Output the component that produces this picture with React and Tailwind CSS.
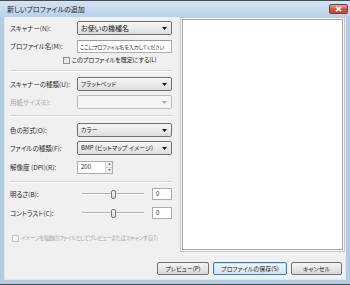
import React from "react";

function Arrow({ disabled }) {
  return (
    <svg width="5" height="3" viewBox="0 0 5 3" className="shrink-0">
      <path d="M0 0 H5 L2.5 3 Z" fill={disabled ? "#a8a8a8" : "#1a1a1a"} />
    </svg>
  );
}

function Select({ value, disabled, big }) {
  return (
    <div
      className={
        "w-[95px] h-[14px] rounded-[2px] border flex items-center justify-between pl-[3px] pr-[4px] " +
        (disabled
          ? "border-[#b8bcc0] bg-[#f4f4f4]"
          : "border-[#707070] bg-gradient-to-b from-[#f6f6f6] to-[#dedede]")
      }
    >
      <span className={big ? "text-[7px]" : "text-[6px]"}>{value}</span>
      <Arrow disabled={disabled} />
    </div>
  );
}

function Label({ children, disabled }) {
  return (
    <span className={"w-[67px] shrink-0 whitespace-nowrap " + (disabled ? "text-[#a8a8a8]" : "text-[#2a2a2a]")}>
      {children}
    </span>
  );
}

function Sep() {
  return <div className="h-[2px] w-[162px] border-t border-[#d4d4d4] border-b border-b-white" />;
}

function Slider({ pos }) {
  return (
    <div className="w-[62px] h-[11px] ml-[5px] relative flex items-center">
      <div className="w-full h-[2px] border-t border-[#b0b0b0] border-b border-b-[#ffffff] bg-[#e7e7e7]" />
      <div
        className="absolute top-[1px] w-[5px] h-[9px] rounded-[2px] border border-[#7a7a7a] bg-gradient-to-b from-[#fafafa] to-[#d8d8d8]"
        style={{ left: pos }}
      />
    </div>
  );
}

function NumBox({ v }) {
  return (
    <div className="w-[20px] h-[12px] ml-auto mr-[8px] border border-[#abadb3] bg-white flex items-center pl-[3px] text-[6px]">
      {v}
    </div>
  );
}

function Row({ children, className = "" }) {
  return <div className={"h-[14px] flex items-center " + className}>{children}</div>;
}

function Btn({ children, w, focus }) {
  return (
    <div
      className={
        "h-[13px] rounded-[2px] border flex items-center justify-center text-[6px] whitespace-nowrap " +
        (focus
          ? "border-[#3c7fb1] bg-gradient-to-b from-[#f4f8fb] to-[#d8e2ea] shadow-[inset_0_0_0_1px_#c2e4f6]"
          : "border-[#707070] bg-gradient-to-b from-[#f4f4f4] to-[#d9d9d9]")
      }
      style={{ width: w }}
    >
      {children}
    </div>
  );
}

export default function App() {
  return (
    <div className="w-[350px] h-[285px] flex flex-col bg-[#b4cbe4] border-t border-b border-[#434d58] font-['Noto_Sans_CJK_JP','Noto_Sans',sans-serif] [font-feature-settings:'palt'] text-[6.5px] leading-none text-[#222] overflow-hidden">
      <div className="h-[16px] shrink-0 flex items-center justify-between pl-[7px] pr-[2px] bg-gradient-to-b from-[#d4e3f3] to-[#bad0e8]">
        <span className="text-[7px] text-[#1c1c1c]">新しいプロファイルの追加</span>
        <div className="w-[19px] h-[10px] rounded-[2px] border border-[#7e3a33] bg-gradient-to-b from-[#e3a59a] via-[#c5594b] to-[#b84a3c] flex items-center justify-center">
          <svg width="7" height="6" viewBox="0 0 7 6">
            <path d="M1 0.8 L6 5.2 M6 0.8 L1 5.2" stroke="#ffffff" strokeWidth="1.6" />
          </svg>
        </div>
      </div>
      <div className="flex-1 flex px-[4px] pb-[4px]">
        <div className="flex-1 flex flex-col bg-[#f0f0f0] border-l border-r border-b border-[#dfe9f4]">
          <div className="flex">
            <div className="w-[175px] shrink-0 pl-[5px] flex flex-col">
              <Row className="mt-[4px]">
                <Label>スキャナー(N):</Label>
                <Select value="お使いの機種名" big />
              </Row>
              <Row className="mt-[4px]">
                <Label>プロファイル名(M):</Label>
                <div className="w-[95px] h-[13px] border border-[#abadb3] border-t-[#9a9ca3] bg-white flex items-center pl-[2px] overflow-hidden whitespace-nowrap text-[5px] tracking-[-0.1px] text-[#222]">
                  ここにプロファイル名を入力してください
                </div>
              </Row>
              <div className="h-[8px] mt-[3px] flex items-center pl-[53px]">
                <div className="w-[7px] h-[7px] border border-[#8f8f8f] bg-gradient-to-br from-[#dcdcdc] to-[#fafafa] mr-[2px]" />
                <span className="text-[6px] whitespace-nowrap">このプロファイルを既定にする(L)</span>
              </div>
              <div className="mt-[6px]"><Sep /></div>
              <Row className="mt-[5px]">
                <Label>スキャナーの種類(U):</Label>
                <Select value="フラットベッド" />
              </Row>
              <Row className="mt-[4px]">
                <Label disabled>用紙サイズ(E):</Label>
                <Select value="" disabled />
              </Row>
              <div className="mt-[6px]"><Sep /></div>
              <Row className="mt-[6px]">
                <Label>色の形式(O):</Label>
                <Select value="カラー" />
              </Row>
              <Row className="mt-[4px]">
                <Label>ファイルの種類(F):</Label>
                <Select value="BMP (ビットマップ イメージ)" />
              </Row>
              <Row className="mt-[5px]">
                <Label>解像度 (DPI)(R):</Label>
                <div className="w-[36px] h-[13px] border border-[#abadb3] bg-white flex items-center">
                  <span className="flex-1 pl-[3px] text-[6px]">200</span>
                  <div className="w-[7px] h-full flex flex-col border-l border-[#d6d6d6]">
                    <div className="flex-1 flex items-center justify-center bg-[#f0f0f0] border-b border-[#d6d6d6]">
                      <svg width="3" height="2" viewBox="0 0 3 2"><path d="M0 2 H3 L1.5 0 Z" fill="#7a7a7a" /></svg>
                    </div>
                    <div className="flex-1 flex items-center justify-center bg-[#f0f0f0]">
                      <svg width="3" height="2" viewBox="0 0 3 2"><path d="M0 0 H3 L1.5 2 Z" fill="#7a7a7a" /></svg>
                    </div>
                  </div>
                </div>
              </Row>
              <div className="mt-[7px]"><Sep /></div>
              <Row className="mt-[4px]">
                <Label>明るさ(B):</Label>
                <Slider pos={29} />
                <NumBox v="0" />
              </Row>
              <Row className="mt-[5px]">
                <Label>コントラスト(C):</Label>
                <Slider pos={29} />
                <NumBox v="0" />
              </Row>
              <div className="h-[9px] mt-[14px] flex items-center pl-[2px]">
                <div className="w-[7px] h-[7px] border border-[#c4c4c4] bg-[#f4f4f4] mr-[2px] shrink-0" />
                <span className="text-[5.5px] tracking-[-0.5px] whitespace-nowrap text-[#a8a8a8]">イメージを複数のファイルとしてプレビューまたはスキャンする(T)</span>
              </div>
            </div>
            <div className="w-[165px] h-[235px] border border-[#c9c9c9] p-px bg-[#f7f7f7]">
              <div className="w-full h-full border border-[#a7a7a7] bg-white" />
            </div>
          </div>
          <div className="mt-[10px] flex justify-end gap-[4px] pr-[3px]">
            <Btn w={52}>プレビュー(P)</Btn>
            <Btn w={74} focus>プロファイルの保存(S)</Btn>
            <Btn w={51}>キャンセル</Btn>
          </div>
        </div>
      </div>
    </div>
  );
}
